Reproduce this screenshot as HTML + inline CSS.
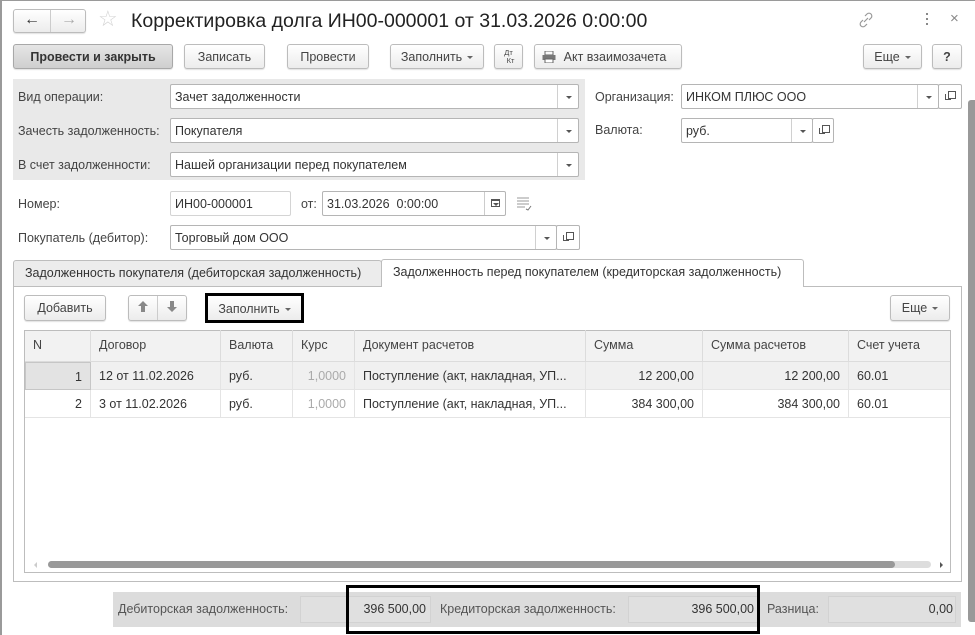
<!DOCTYPE html>
<html><head><meta charset="utf-8"><style>
*{box-sizing:border-box;margin:0;padding:0}
body{width:975px;height:635px;position:relative;overflow:hidden;background:#fff;font-family:"Liberation Sans",Arial,sans-serif;font-size:12.5px;color:#333}
.a{position:absolute;white-space:nowrap}
.btn{position:absolute;border:1px solid #bcbcbc;border-radius:3px;background:linear-gradient(#fff,#ececec);box-shadow:0 1px 1px rgba(0,0,0,.12);text-align:center;color:#444;font-size:12.5px}
.fld{position:absolute;border:1px solid #b5b5b5;border-radius:2px;background:#fff;padding-left:4px;color:#333}
.dd{position:absolute;top:0;bottom:0;border-left:1px solid #d0d0d0;width:21px}
.dd:after{content:"";position:absolute;left:8px;top:50%;margin-top:-1px;border-left:3px solid transparent;border-right:3px solid transparent;border-top:3px solid #555}
.cp{position:absolute;border:1px solid #b5b5b5;border-radius:2px;background:#fff}
.cp:before{content:"";position:absolute;left:9px;top:6px;width:6px;height:6px;border:1px solid #555}
.cp:after{content:"";position:absolute;left:6px;top:9px;width:5px;height:5px;border-left:1px solid #555;border-bottom:1px solid #555}
.lbl{position:absolute;color:#444}
.arr{display:inline-block;margin-left:5px;vertical-align:middle;border-left:3px solid transparent;border-right:3px solid transparent;border-top:3px solid #666}
.th{position:absolute;top:330px;height:32px;line-height:31px;padding-left:8px;border-right:1px solid #dcdcdc;color:#444}
.td{position:absolute;height:28px;line-height:29px;padding:0 8px;border-right:1px solid #e4e4e4;border-bottom:1px solid #e4e4e4}
</style></head><body>
<div class="a" style="left:0;top:0;width:975px;height:1px;background:#9a9a9a"></div>
<div class="a" style="left:0;top:0;width:2px;height:635px;background:#9a9a9a"></div>
<div class="btn" style="left:13px;top:9px;width:73px;height:24px"></div>
<div class="a" style="left:50px;top:10px;width:1px;height:22px;background:#ccc"></div>
<div class="a" style="left:24px;top:9px;font-size:16px;line-height:22px;color:#333">&#8592;</div>
<div class="a" style="left:61px;top:9px;font-size:16px;line-height:22px;color:#aaa">&#8594;</div>
<div class="a" style="left:98px;top:6px;font-size:22px;line-height:26px;color:#d4d4d4">&#9734;</div>
<div class="a" style="left:131px;top:8px;font-size:19.5px;line-height:26px;color:#222">Корректировка долга ИН00-000001 от 31.03.2026 0:00:00</div>
<svg class="a" style="left:858px;top:12px" width="16" height="16" viewBox="0 0 16 16"><path d="M6 10l4-4M7 4l2-2a2.8 2.8 0 0 1 4 4l-2 2M9 12l-2 2a2.8 2.8 0 0 1-4-4l2-2" stroke="#999" fill="none" stroke-width="1.2"/></svg>
<div class="a" style="left:926px;top:13px;width:2px;height:2px;background:#888;box-shadow:0 5px #888,0 10px #888"></div>
<div class="a" style="left:950px;top:10px;font-size:15px;color:#888">×</div>
<div class="btn" style="left:13px;top:44px;width:160px;height:25px;line-height:24px;font-weight:bold;background:linear-gradient(#e6e6e6,#cfcfcf);border-color:#a8a8a8;color:#333">Провести и закрыть</div>
<div class="btn" style="left:184px;top:44px;width:81px;height:25px;line-height:24px">Записать</div>
<div class="btn" style="left:287px;top:44px;width:82px;height:25px;line-height:24px">Провести</div>
<div class="btn" style="left:390px;top:44px;width:94px;height:25px;line-height:24px">Заполнить<span class="arr"></span></div>
<div class="btn" style="left:494px;top:44px;width:29px;height:25px;font-size:7.5px;line-height:8px;padding-top:4px">Дт<br>&nbsp;&nbsp;Кт</div>
<div class="btn" style="left:534px;top:44px;width:148px;height:25px;line-height:24px;padding-left:14px"><svg style="position:absolute;left:7px;top:6px" width="14" height="12"><rect x="3" y="0" width="8" height="4" fill="none" stroke="#666"/><rect x="0.5" y="4" width="13" height="5" fill="#777"/><rect x="3" y="8" width="8" height="4" fill="#fff" stroke="#666"/></svg>Акт взаимозачета</div>
<div class="btn" style="left:863px;top:44px;width:59px;height:25px;line-height:24px">Еще<span class="arr"></span></div>
<div class="btn" style="left:932px;top:44px;width:30px;height:25px;line-height:24px;font-weight:bold">?</div>
<div class="a" style="left:13px;top:79px;width:572px;height:101px;background:#e9e9e9"></div>
<div class="lbl" style="left:18px;top:90px">Вид операции:</div>
<div class="lbl" style="left:18px;top:124px">Зачесть задолженность:</div>
<div class="lbl" style="left:18px;top:158px">В счет задолженности:</div>
<div class="fld" style="left:170px;top:84px;width:409px;height:25px;line-height:25px">Зачет задолженности<span class="dd" style="right:0"></span></div>
<div class="fld" style="left:170px;top:118px;width:409px;height:25px;line-height:25px">Покупателя<span class="dd" style="right:0"></span></div>
<div class="fld" style="left:170px;top:152px;width:409px;height:25px;line-height:25px">Нашей организации перед покупателем<span class="dd" style="right:0"></span></div>
<div class="lbl" style="left:595px;top:90px">Организация:</div>
<div class="fld" style="left:681px;top:84px;width:258px;height:25px;line-height:25px">ИНКОМ ПЛЮС ООО<span class="dd" style="right:0"></span></div>
<div class="cp" style="left:938px;top:84px;width:24px;height:25px"></div>
<div class="lbl" style="left:595px;top:123px">Валюта:</div>
<div class="fld" style="left:681px;top:118px;width:132px;height:25px;line-height:25px">руб.<span class="dd" style="right:0"></span></div>
<div class="cp" style="left:812px;top:118px;width:22px;height:25px"></div>
<div class="lbl" style="left:18px;top:197px">Номер:</div>
<div class="fld" style="left:170px;top:191px;width:121px;height:25px;line-height:25px;border-color:#d4d4d4">ИН00-000001</div>
<div class="lbl" style="left:301px;top:197px">от:</div>
<div class="fld" style="left:322px;top:191px;width:184px;height:25px;line-height:25px">31.03.2026&nbsp; 0:00:00<span class="dd" style="right:0;border-left-color:#ccc"><span style="position:absolute;left:6px;top:7px;width:9px;height:8px;border:1px solid #555;border-top-width:2px"></span></span></div>
<svg class="a" style="left:516px;top:197px" width="16" height="14"><path d="M1 1h12M1 4h12M1 7h12M1 10h8" stroke="#999" fill="none"/><path d="M10 12l2 1 3-4" stroke="#777" fill="none"/></svg>
<div class="lbl" style="left:18px;top:231px">Покупатель (дебитор):</div>
<div class="fld" style="left:170px;top:225px;width:387px;height:25px;line-height:25px">Торговый дом ООО<span class="dd" style="right:0"></span></div>
<div class="cp" style="left:556px;top:225px;width:24px;height:25px"></div>
<div class="a" style="left:13px;top:260px;width:369px;height:27px;background:#ececec;border:1px solid #bdbdbd;border-radius:3px 3px 0 0;line-height:24px;padding-left:11px;color:#333">Задолженность покупателя (дебиторская задолженность)</div>
<div class="a" style="left:13px;top:286px;width:949px;height:296px;border:1px solid #bdbdbd"></div>
<div class="a" style="left:381px;top:259px;width:423px;height:28px;background:#fff;border:1px solid #bdbdbd;border-bottom:none;border-radius:3px 3px 0 0;line-height:24px;padding-left:11px;color:#333">Задолженность перед покупателем (кредиторская задолженность)</div>
<div class="btn" style="left:24px;top:295px;width:82px;height:26px;line-height:25px">Добавить</div>
<div class="btn" style="left:128px;top:295px;width:59px;height:26px"></div>
<div class="a" style="left:157px;top:296px;width:1px;height:24px;background:#ccc"></div>
<svg class="a" style="left:137px;top:300px" width="12" height="13"><path d="M6 1L1 6h3v6h4V6h3z" fill="#888"/></svg>
<svg class="a" style="left:166px;top:300px" width="12" height="13"><path d="M6 12L1 7h3V1h4v6h3z" fill="#888"/></svg>
<div class="btn" style="left:205px;top:293px;width:99px;height:30px;line-height:26px;border:3px solid #000;border-radius:0;box-shadow:none">Заполнить<span class="arr"></span></div>
<div class="btn" style="left:890px;top:295px;width:60px;height:26px;line-height:25px">Еще<span class="arr"></span></div>
<div class="a" style="left:24px;top:330px;width:927px;height:243px;border:1px solid #bdbdbd;background:#fff"></div>
<div class="a" style="left:25px;top:331px;width:925px;height:31px;background:#f2f2f2;border-bottom:1px solid #dcdcdc"></div>
<div class="th" style="left:25px;width:66px">N</div>
<div class="th" style="left:91px;width:130px">Договор</div>
<div class="th" style="left:221px;width:72px">Валюта</div>
<div class="th" style="left:293px;width:62px">Курс</div>
<div class="th" style="left:355px;width:231px">Документ расчетов</div>
<div class="th" style="left:586px;width:117px">Сумма</div>
<div class="th" style="left:703px;width:146px">Сумма расчетов</div>
<div class="th" style="left:849px;width:101px;border-right:none">Счет учета</div>
<div class="a" style="left:25px;top:362px;width:925px;height:28px;background:#f0f0f0"></div>
<div class="td" style="left:25px;top:362px;width:66px;text-align:right;background:#e3e3e3;border:1px solid #c6c6c6">1</div>
<div class="td" style="left:91px;top:362px;width:130px">12 от 11.02.2026</div>
<div class="td" style="left:221px;top:362px;width:72px">руб.</div>
<div class="td" style="left:293px;top:362px;width:62px;text-align:right;color:#aaa">1,0000</div>
<div class="td" style="left:355px;top:362px;width:231px">Поступление (акт, накладная, УП...</div>
<div class="td" style="left:586px;top:362px;width:117px;text-align:right">12 200,00</div>
<div class="td" style="left:703px;top:362px;width:146px;text-align:right">12 200,00</div>
<div class="td" style="left:849px;top:362px;width:101px;border-right:none">60.01</div>
<div class="td" style="left:25px;top:390px;width:66px;text-align:right">2</div>
<div class="td" style="left:91px;top:390px;width:130px">3 от 11.02.2026</div>
<div class="td" style="left:221px;top:390px;width:72px">руб.</div>
<div class="td" style="left:293px;top:390px;width:62px;text-align:right;color:#aaa">1,0000</div>
<div class="td" style="left:355px;top:390px;width:231px">Поступление (акт, накладная, УП...</div>
<div class="td" style="left:586px;top:390px;width:117px;text-align:right">384 300,00</div>
<div class="td" style="left:703px;top:390px;width:146px;text-align:right">384 300,00</div>
<div class="td" style="left:849px;top:390px;width:101px;border-right:none">60.01</div>
<div class="a" style="left:48px;top:561px;width:883px;height:7px;border-radius:4px;background:#ddd"></div>
<div class="a" style="left:48px;top:561px;width:847px;height:7px;border-radius:4px;background:#999"></div>
<div class="a" style="left:34px;top:562px;border-top:3px solid transparent;border-bottom:3px solid transparent;border-right:3px solid #ccc"></div>
<div class="a" style="left:940px;top:562px;border-top:3px solid transparent;border-bottom:3px solid transparent;border-left:3px solid #555"></div>
<div class="a" style="left:113px;top:592px;width:848px;height:35px;background:#dcdcdc"></div>
<div class="a" style="left:300px;top:596px;width:131px;height:27px;border:1px solid #d2d2d2;background:#e0e0e0"></div>
<div class="a" style="left:628px;top:596px;width:130px;height:27px;border:1px solid #d2d2d2;background:#e0e0e0"></div>
<div class="a" style="left:828px;top:596px;width:128px;height:27px;border:1px solid #d2d2d2;background:#e0e0e0"></div>
<div class="lbl" style="left:118px;top:602px;color:#555">Дебиторская задолженность:</div>
<div class="a" style="left:300px;top:602px;width:126px;text-align:right">396 500,00</div>
<div class="lbl" style="left:440px;top:602px;color:#555">Кредиторская задолженность:</div>
<div class="a" style="left:628px;top:602px;width:126px;text-align:right">396 500,00</div>
<div class="lbl" style="left:767px;top:602px;color:#555">Разница:</div>
<div class="a" style="left:828px;top:602px;width:125px;text-align:right">0,00</div>
<div class="a" style="left:346px;top:585px;width:414px;height:49px;border:3px solid #000"></div>
<div class="a" style="left:968px;top:100px;width:7px;height:522px;background:#999;border-radius:3px 0 0 3px"></div>
</body></html>
